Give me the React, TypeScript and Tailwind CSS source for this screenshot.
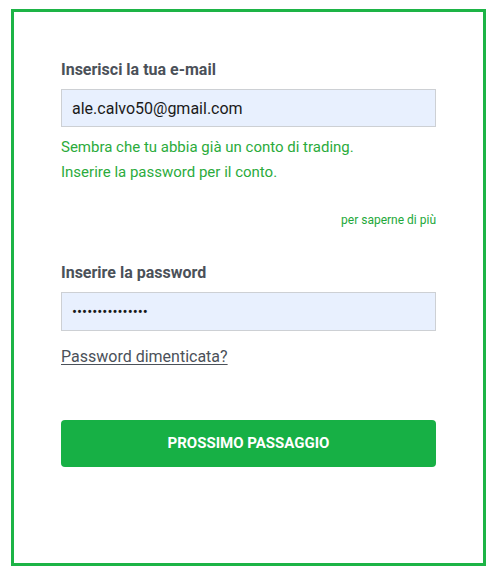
import { useState } from 'react';

export default function App() {
  const [email, setEmail] = useState('ale.calvo50@gmail.com');
  const [password, setPassword] = useState('123456789012345');

  return (
    <div className="h-[576px] w-[492px] bg-white pl-[11px] pt-[9px] font-['Roboto',sans-serif]">
      <div className="flex h-[557px] w-[475px] flex-col border-[3px] border-[#1db446] px-[47px] pt-[48px]">
        <label className="text-[16px] font-bold leading-[20px] text-[#4b5159]" htmlFor="email">
          Inserisci la tua e-mail
        </label>
        <input
          id="email"
          value={email}
          onChange={(e) => setEmail(e.target.value)}
          className="mt-[9px] h-[38px] w-full border border-[#cdd0d4] bg-[#e8f0fe] px-[10px] text-[16px] text-[#1a1a1a] outline-none"
        />
        <p className="mt-[8px] text-[15px] leading-[25px] text-[#2bab3c]">
          Sembra che tu abbia già un conto di trading.
          <br />
          Inserire la password per il conto.
        </p>
        <a className="mt-[27px] self-end text-[12px] leading-[16px] text-[#1ea83a]" href="#">
          per saperne di più
        </a>

        <label className="mt-[35px] text-[16px] font-bold leading-[20px] text-[#4b5159]" htmlFor="password">
          Inserire la password
        </label>
        <input
          id="password"
          type="password"
          value={password}
          onChange={(e) => setPassword(e.target.value)}
          className="mt-[9px] h-[39px] w-full border border-[#cdd0d4] bg-[#e8f0fe] px-[10px] text-[15px] text-[#1a1a1a] outline-none"
        />
        <a className="mt-[15px] self-start text-[16px] leading-[22px] text-[#4b5159] underline underline-offset-2" href="#">
          Password dimenticata?
        </a>

        <button className="mt-[52px] h-[47px] w-full rounded-[4px] bg-[#17b045] text-[15px] font-bold text-white">
          PROSSIMO PASSAGGIO
        </button>
      </div>
    </div>
  );
}
